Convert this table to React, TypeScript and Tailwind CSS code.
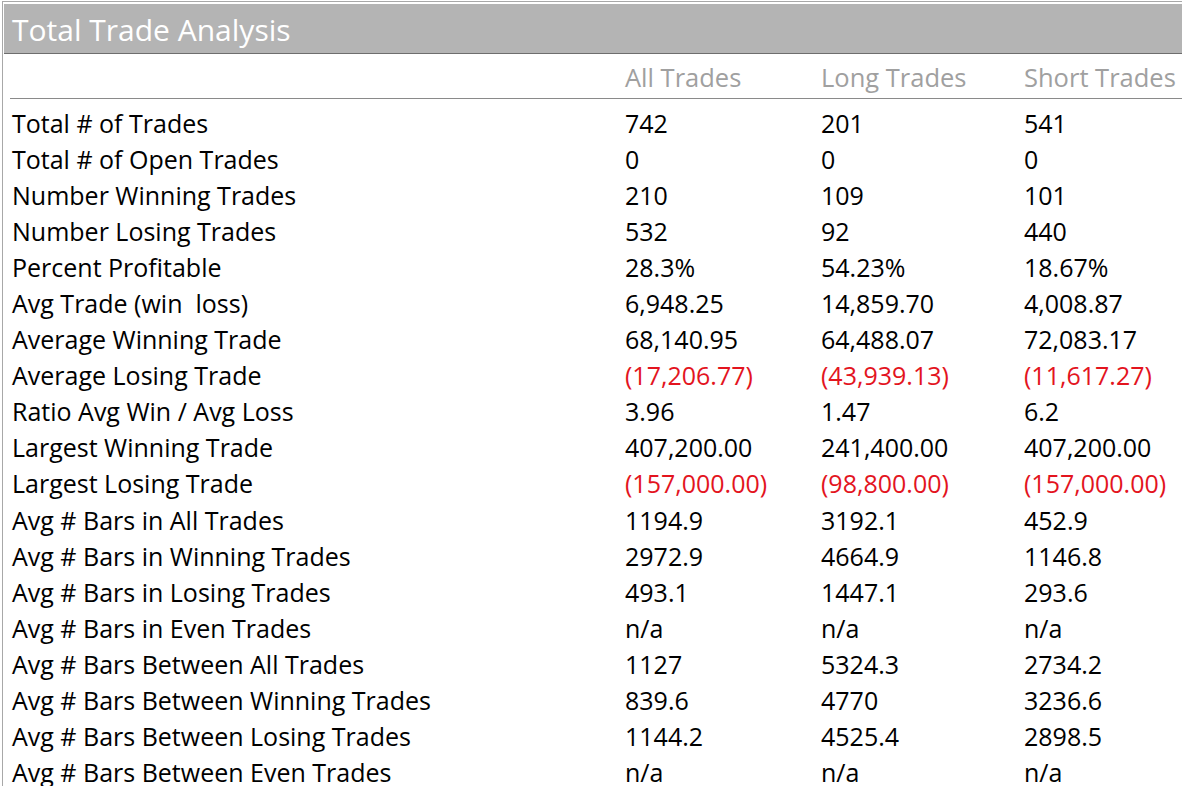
import React from 'react';

type Row = { label: string; all: string; long: string; short: string; neg?: boolean };

const ROWS: Row[] = [
  { label: 'Total # of Trades', all: '742', long: '201', short: '541' },
  { label: 'Total # of Open Trades', all: '0', long: '0', short: '0' },
  { label: 'Number Winning Trades', all: '210', long: '109', short: '101' },
  { label: 'Number Losing Trades', all: '532', long: '92', short: '440' },
  { label: 'Percent Profitable', all: '28.3%', long: '54.23%', short: '18.67%' },
  { label: 'Avg Trade (win  loss)', all: '6,948.25', long: '14,859.70', short: '4,008.87' },
  { label: 'Average Winning Trade', all: '68,140.95', long: '64,488.07', short: '72,083.17' },
  { label: 'Average Losing Trade', all: '(17,206.77)', long: '(43,939.13)', short: '(11,617.27)', neg: true },
  { label: 'Ratio Avg Win / Avg Loss', all: '3.96', long: '1.47', short: '6.2' },
  { label: 'Largest Winning Trade', all: '407,200.00', long: '241,400.00', short: '407,200.00' },
  { label: 'Largest Losing Trade', all: '(157,000.00)', long: '(98,800.00)', short: '(157,000.00)', neg: true },
  { label: 'Avg # Bars in All Trades', all: '1194.9', long: '3192.1', short: '452.9' },
  { label: 'Avg # Bars in Winning Trades', all: '2972.9', long: '4664.9', short: '1146.8' },
  { label: 'Avg # Bars in Losing Trades', all: '493.1', long: '1447.1', short: '293.6' },
  { label: 'Avg # Bars in Even Trades', all: 'n/a', long: 'n/a', short: 'n/a' },
  { label: 'Avg # Bars Between All Trades', all: '1127', long: '5324.3', short: '2734.2' },
  { label: 'Avg # Bars Between Winning Trades', all: '839.6', long: '4770', short: '3236.6' },
  { label: 'Avg # Bars Between Losing Trades', all: '1144.2', long: '4525.4', short: '2898.5' },
  { label: 'Avg # Bars Between Even Trades', all: 'n/a', long: 'n/a', short: 'n/a' },
];

const grid = 'grid grid-cols-[613px_196px_203px_1fr]';

export default function App() {
  return (
    <div
      className="w-[1182px] h-[786px] overflow-hidden bg-white pl-[2px] pt-[1px]"
      style={{ fontFamily: '"Open Sans", "Noto Sans", sans-serif' }}
    >
      <div className="h-full border-l border-t border-[#a8a8a8] pt-[2px] pl-[1px]">
        {/* Title bar */}
        <div className="h-[50px] bg-[#b4b4b4] border-b border-[#6e6e6e] flex items-center pl-[8px] pt-[2px]">
          <span className="text-[30px] text-white leading-none">Total Trade Analysis</span>
        </div>

        {/* Column headers */}
        <div className="ml-[6px] border-b border-[#8a8a8a] h-[45px] text-[#a0a0a0]">
          <div className={`${grid} h-full items-center text-[25.5px] leading-none -ml-[6px] pl-[8px] pt-[4px]`}>
            <span />
            <span>All Trades</span>
            <span>Long Trades</span>
            <span className="whitespace-nowrap">Short Trades</span>
          </div>
        </div>

        {/* Rows */}
        <div className="pt-[6px] pl-[8px] text-[25px] leading-none text-black">
          {ROWS.map((r) => (
            <div key={r.label} className={`${grid} h-[36.1px] items-center whitespace-pre`}>
              <span>{r.label}</span>
              <span className={r.neg ? 'text-[#e3141e]' : ''}>{r.all}</span>
              <span className={r.neg ? 'text-[#e3141e]' : ''}>{r.long}</span>
              <span className={r.neg ? 'text-[#e3141e]' : ''}>{r.short}</span>
            </div>
          ))}
        </div>
      </div>
    </div>
  );
}
